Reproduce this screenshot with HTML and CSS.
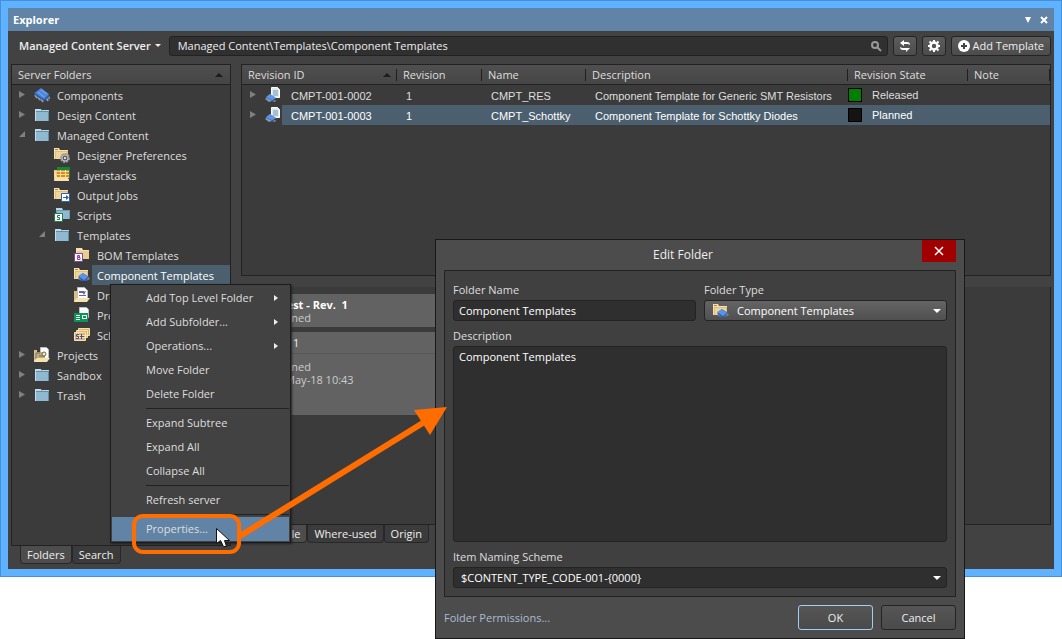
FILE: index.html
```html
<!DOCTYPE html>
<html lang="en">
<head>
  <meta charset="UTF-8" />
  <meta name="viewport" content="width=device-width, initial-scale=1.0" />
  <title>Explorer</title>
  <link rel="stylesheet" href="styles.css">
</head>
<body>
  <!-- shared icons -->
  <svg class="sprite" aria-hidden="true">
    <symbol id="folder" viewBox="0 0 16 16">
      <path fill="#b9d7e6" d="M1 2h6l1 2h-7z"/><path fill="#b9d7e6" d="M8 3h7v1H8z"/><path fill="#5f8fa8" d="M1 4h14v10H1z"/><path fill="#8fb9d0" d="M2 5h12v9H2z"/><path fill="#c5dde9" d="M1 4h1v10H1zM2 2h4v1H2z"/>
    </symbol>
    <symbol id="yfolder" viewBox="0 0 16 16">
      <path fill="#f6e2b0" d="M0 1h5l1 2h8v9H0z"/><path fill="#e0bd7a" d="M1 4h13v8H1z"/><path fill="#f0d59b" d="M2 5h11v7H2z"/><path fill="#a98446" d="M1 2h3v1H1z"/>
    </symbol>
    <symbol id="chip" viewBox="0 0 16 16">
      <path stroke="#8d99a8" stroke-width="2" d="M1 8l2 3M4 10l2 3M7 12l2 3M13 8l3 4M12 10l2 4"/><path fill="#2e5fae" d="M0 6l6-4 9 6v2l-5 4L1 8z"/><path fill="#4e88dc" d="M1 6l6-5 8 6-5 5z"/><path stroke="#7badf2" d="M4 5l6 5M7 3l6 4"/>
    </symbol>
    <symbol id="gearfolder" viewBox="0 0 16 16">
      <use href="#yfolder"/><circle cx="11" cy="11" r="4" fill="#777" stroke="#9a9a9a" stroke-width="2" stroke-dasharray="2 1"/><circle cx="11" cy="11" r="3" fill="#5d5d5d" stroke="#c4c4c4"/><path fill="#d8d8d8" d="M10 10h2v2h-2z"/>
    </symbol>
    <symbol id="layers" viewBox="0 0 16 16">
      <path fill="#e7c986" d="M0 3h3v9h12v2H0z"/><path fill="#12873a" d="M3 0h13v3H3z"/><path fill="#d9862c" d="M3 2h13v9H3z"/><path stroke="#f5e08d" d="M3 4.500h13M3 7.500h13M3 10.500h13M6.500 3v8M11.500 3v8"/><path fill="#12873a" d="M3 1h13v2H3zM15 3h1v8h-1z"/><path fill="#f6e2b0" d="M0 4h1l2 7h11l1 3H1z"/>
    </symbol>
    <symbol id="outjob" viewBox="0 0 16 16">
      <use href="#yfolder"/><path fill="#fff" stroke="#2a62ae" d="M7.500 6.500h8v8h-8z"/><path fill="#2a62ae" d="M9 10h3V8l3 2.500-3 2.500v-2H9z"/>
    </symbol>
    <symbol id="script" viewBox="0 0 16 16">
      <path fill="#b9d7e6" d="M2 1h6l1 2h-7z"/><path fill="#6d9db6" d="M2 3h14v9H2z"/><path fill="#8fb9d0" d="M3 4h12v8H3z"/><path fill="#fff" stroke="#1f7a4c" d="M.5 6.500h8v8h-8z"/><path fill="none" stroke="#1f7a4c" d="M6 8.500H3.500v2h2v2H3"/>
    </symbol>
    <symbol id="bom" viewBox="0 0 16 16">
      <path fill="#f6e2b0" d="M2 1h6l1 2h6v9H2z"/><path fill="#e9cd90" d="M3 4h12v8H3z"/><path fill="#fff" stroke="#8a3fa0" d="M.5 6.500h8v8h-8z"/><path fill="none" stroke="#8a3fa0" d="M3.500 8.500h2v1.500h-2zM3.500 10.500h2.500v2H3.500z"/>
    </symbol>
    <symbol id="comptpl" viewBox="0 0 16 16">
      <use href="#yfolder"/><path fill="#7d8997" d="M4 12l2-2 2 4zM12 14l4-2-2-3z"/><path fill="#2e62b8" d="M4 10l5-4 6 4-3 4H8z"/><path fill="#5b94e6" d="M4 9l5-3 5 4-4 3z"/>
    </symbol>
    <symbol id="drawing" viewBox="0 0 16 16">
      <path fill="#e0bd7a" d="M0 4h3v10H0z"/><path fill="#fff" stroke="#b5bfca" d="M3.500.5h7l3 3v8h-10z"/><path fill="#6c60a8" d="M5 4h5v2H5zM5 8h7v1H5zM8 5l4-1-2 4z"/><path fill="#f6e2b0" d="M0 14l3-3h13l-3 4H0z"/>
    </symbol>
    <symbol id="pcbtpl" viewBox="0 0 16 16">
      <path fill="#fff" stroke="#b5bfca" d="M5.500.5h7l2 2v8h-9z"/><path fill="#11915a" d="M0 6h14v9H0z"/><path fill="#eafff4" d="M2 8h4v1H2zM2 10h4v1H2zM2 12h4v1H2zM8 8h5v4H8z"/><path fill="#11915a" d="M9 9h3v2H9z"/>
    </symbol>
    <symbol id="schtpl" viewBox="0 0 16 16">
      <path fill="#d9b46c" stroke="#f6e2b0" d="M4.500 1.500h11v7h-11zM2.500 3.500h11v7h-11zM.5 5.500h11v8H.5z"/><path fill="none" stroke="#4a4cab" d="M5 7.500H2.500v2h2v2H2M6 9.500h4M7.500 7v5"/>
    </symbol>
    <symbol id="projects" viewBox="0 0 16 16">
      <path fill="#e0bd7a" d="M0 3h3v11H0z"/><path fill="#fff" stroke="#b5bfca" d="M6.500.5h6l2 2v9h-8z"/><path fill="#ccaa66" d="M3 5h8v6H3z"/><path fill="none" stroke="#47749b" d="M2 12V6h4M5 9h6"/><circle cx="10" cy="7" r="2" fill="#ffe9a6" stroke="#6a6a6a"/><path fill="#f6e2b0" d="M0 14l3-3h13l-3 4H0z"/>
    </symbol>
    <symbol id="revision" viewBox="0 0 16 16">
      <path fill="#8d99a8" d="M0 12l3-3 4 5-3 1zM7 14l4-1-1 2z"/><path fill="#dfe9f0" stroke="#fff" d="M6.500.5h6l2 2v8h-8z"/><path fill="#a9c0ce" d="M8 3h5v6H8z"/><path fill="#3f79d0" d="M1 11l4-4 6 4-4 3z"/><path fill="#5b94e6" d="M1 10l4-3 6 4-4 2z"/>
    </symbol>
  </svg>

  <main class="explorer">
    <header class="titlebar">
      <h1>Explorer</h1>
      <button class="title-btn" aria-label="Panel menu"><svg viewBox="0 0 8 8"><path fill="#fff" d="M1 1h6L4 7z"/></svg></button>
      <button class="title-btn" aria-label="Close panel"><svg viewBox="0 0 8 8"><path stroke="#fff" stroke-width="2" d="M1 1l6 6M7 1L1 7"/></svg></button>
    </header>

    <div class="toolbar">
      <button class="server-btn">Managed Content Server <svg viewBox="0 0 6 4"><path fill="#eee" d="M0 0h6L3 3z"/></svg></button>
      <div class="search">
        <input type="text" aria-label="Path" value="Managed Content\Templates\Component Templates">
        <svg viewBox="0 0 12 12"><circle cx="5" cy="5" r="3" fill="none" stroke="#999" stroke-width="2"/><path stroke="#999" stroke-width="2" d="M7 7l4 4"/></svg>
      </div>
      <button class="tool-btn" aria-label="Refresh"><svg viewBox="0 0 12 12"><path fill="#fff" d="M5 0v2h3q3 0 3 3L9 4H5v2L1 3zM7 6v2h4L7 12v-2H4Q1 10 1 7l2 1h4z"/></svg></button>
      <button class="tool-btn" aria-label="Settings"><svg viewBox="0 0 12 12"><circle cx="6" cy="6" r="3.500" fill="none" stroke="#fff" stroke-width="2.500"/><path stroke="#fff" stroke-width="2" d="M6 0v2M6 10v2M0 6h2M10 6h2M1.500 1.500L3 3M9 9l1.500 1.500M10.500 1.500L9 3M3 9l-1.500 1.500"/></svg></button>
      <button class="add-btn"><svg viewBox="0 0 12 12"><circle cx="6" cy="6" r="6" fill="#fff"/><path stroke="#444" stroke-width="2" d="M6 3v6M3 6h6"/></svg>Add Template</button>
    </div>

    <div class="panes">
      <nav class="left-pane">
        <div class="tree-panel">
          <div class="tree-head">Server Folders<i class="sort"></i></div>
          <ul class="tree">
            <li><div class="node"><i class="twisty"></i><svg><use href="#chip"/></svg><span>Components</span></div></li>
            <li><div class="node"><i class="twisty"></i><svg><use href="#folder"/></svg><span>Design Content</span></div></li>
            <li>
              <div class="node"><i class="twisty open"></i><svg><use href="#folder"/></svg><span>Managed Content</span></div>
              <ul>
                <li><div class="node"><i class="twisty none"></i><svg><use href="#gearfolder"/></svg><span>Designer Preferences</span></div></li>
                <li><div class="node"><i class="twisty none"></i><svg><use href="#layers"/></svg><span>Layerstacks</span></div></li>
                <li><div class="node"><i class="twisty none"></i><svg><use href="#outjob"/></svg><span>Output Jobs</span></div></li>
                <li><div class="node"><i class="twisty none"></i><svg><use href="#script"/></svg><span>Scripts</span></div></li>
                <li>
                  <div class="node"><i class="twisty open"></i><svg><use href="#folder"/></svg><span>Templates</span></div>
                  <ul>
                    <li><div class="node"><i class="twisty none"></i><svg><use href="#bom"/></svg><span>BOM Templates</span></div></li>
                    <li><div class="node selected"><i class="twisty none"></i><svg><use href="#comptpl"/></svg><span>Component Templates</span></div></li>
                    <li><div class="node"><i class="twisty none"></i><svg><use href="#drawing"/></svg><span>Draftsman</span></div></li>
                    <li><div class="node"><i class="twisty none"></i><svg><use href="#pcbtpl"/></svg><span>Projects</span></div></li>
                    <li><div class="node"><i class="twisty none"></i><svg><use href="#schtpl"/></svg><span>Schematic</span></div></li>
                  </ul>
                </li>
              </ul>
            </li>
            <li><div class="node"><i class="twisty"></i><svg><use href="#projects"/></svg><span>Projects</span></div></li>
            <li><div class="node"><i class="twisty"></i><svg><use href="#folder"/></svg><span>Sandbox</span></div></li>
            <li><div class="node"><i class="twisty"></i><svg><use href="#folder"/></svg><span>Trash</span></div></li>
          </ul>
        </div>
        <div class="tabs">
          <button class="tab active">Folders</button>
          <button class="tab">Search</button>
        </div>
      </nav>

      <section class="right-pane">
        <div class="grid-panel">
          <table class="revisions">
            <colgroup><col class="c-id"><col class="c-rev"><col class="c-name"><col class="c-desc"><col class="c-state"><col></colgroup>
            <thead>
              <tr><th><div class="th-sort">Revision ID<i class="sort"></i></div></th><th>Revision</th><th>Name</th><th>Description</th><th>Revision State</th><th>Note</th></tr>
            </thead>
            <tbody>
              <tr>
                <td class="id"><div class="id-cell"><i class="twisty"></i><svg><use href="#revision"/></svg><span>CMPT-001-0002</span></div></td>
                <td>1</td><td>CMPT_RES</td><td>Component Template for Generic SMT Resistors</td>
                <td class="state"><div class="state-cell"><i class="swatch released"></i>Released</div></td><td></td>
              </tr>
              <tr class="selected">
                <td class="id"><div class="id-cell"><i class="twisty"></i><svg><use href="#revision"/></svg><span>CMPT-001-0003</span></div></td>
                <td>1</td><td>CMPT_Schottky</td><td>Component Template for Schottky Diodes</td>
                <td class="state"><div class="state-cell"><i class="swatch planned"></i>Planned</div></td><td></td>
              </tr>
            </tbody>
          </table>
        </div>
        <div class="detail-panel">
          <div class="card">
            <strong>Latest - Rev.&nbsp; 1</strong>
            <span>Planned</span>
          </div>
          <div class="card history">
            <div class="card-head">1</div>
            <p>Planned</p>
            <p>15-May-18 10:43</p>
          </div>
        </div>
        <div class="tabs detail-tabs">
          <button class="tab active">Lifecycle</button>
          <button class="tab">Where-used</button>
          <button class="tab">Origin</button>
        </div>
      </section>
    </div>
  </main>

  <div class="menu" role="menu">
    <button class="sub" role="menuitem">Add Top Level Folder</button>
    <button class="sub" role="menuitem">Add Subfolder...</button>
    <button class="sub" role="menuitem">Operations...</button>
    <button role="menuitem">Move Folder</button>
    <button role="menuitem">Delete Folder</button>
    <hr>
    <button role="menuitem">Expand Subtree</button>
    <button role="menuitem">Expand All</button>
    <button role="menuitem">Collapse All</button>
    <hr>
    <button role="menuitem">Refresh server</button>
    <hr>
    <button class="hover" role="menuitem">Properties...</button>
  </div>

  <form class="dialog" onsubmit="return false">
    <div class="dialog-title">
      <h2>Edit Folder</h2>
      <button class="close" type="button" aria-label="Close"><svg viewBox="0 0 10 10"><path stroke="#fff" stroke-width="1.500" d="M1 1l8 8M9 1L1 9"/></svg></button>
    </div>
    <div class="dialog-body">
      <div class="row">
        <div class="field">
          <label for="name">Folder Name</label>
          <input id="name" type="text" value="Component Templates">
        </div>
        <div class="field">
          <label for="type">Folder Type</label>
          <div class="select raised">
            <svg><use href="#comptpl"/></svg>
            <select id="type"><option>Component Templates</option></select>
          </div>
        </div>
      </div>
      <div class="field grow">
        <label for="desc">Description</label>
        <textarea id="desc">Component Templates</textarea>
      </div>
      <div class="field">
        <label for="scheme">Item Naming Scheme</label>
        <div class="select">
          <select id="scheme"><option>$CONTENT_TYPE_CODE-001-{0000}</option></select>
        </div>
      </div>
    </div>
    <div class="dialog-foot">
      <a href="#">Folder Permissions...</a>
      <button class="ok" type="button">OK</button>
      <button type="button">Cancel</button>
    </div>
  </form>

  <!-- callout from the menu item to the dialog -->
  <svg class="callout" viewBox="0 0 340 170" aria-hidden="true">
    <rect x="14" y="116" width="105" height="36" rx="9" fill="none" stroke="#ff6c00" stroke-width="4"/>
    <path stroke="#ff6c00" stroke-width="6" d="M120 136L306 21"/>
    <path fill="#ff6c00" d="M294 10l33-3-17 28z"/>
    <path fill="#fff" stroke="#111" d="M96.500 128.500v15l4-3 3 6h3l-2-6h5z"/>
  </svg>
</body>
</html>
```
FILE: styles.css
```css
* {
  box-sizing: border-box;
}
body {
  position: relative;
  display: flex;
  flex-direction: column;
  min-height: 100vh;
  margin: 0;
  padding-bottom: 62px;
  background: #fff;
  color: #dedede;
  font: 11px/16px "Open Sans", "Noto Sans", sans-serif;
}
button, input, select, textarea {
  margin: 0;
  color: inherit;
  font: inherit;
}
button {
  padding: 0;
  border: none;
  background: none;
}
ul {
  margin: 0;
  padding: 0;
  list-style: none;
}
svg {
  display: block;
  flex: none;
}
.sprite {
  position: absolute;
  width: 0;
  height: 0;
}

/* explorer window */
.explorer {
  flex: 1;
  display: flex;
  flex-direction: column;
  padding: 7px;
  border: 1px solid #4590d8;
  background: #5fb2ff;
}
.titlebar {
  display: flex;
  align-items: center;
  gap: 8px;
  height: 23px;
  padding: 0 6px 0 5px;
  background: #6183a6;
  color: #fff;
}
.titlebar h1 {
  flex: 1;
  margin: 0;
  font-size: 11px;
}
.title-btn svg {
  width: 8px;
  height: 8px;
}
.toolbar {
  display: flex;
  align-items: center;
  gap: 5px;
  height: 33px;
  padding: 0 3px 3px 11px;
  background: #424242;
  color: #eee;
}
.server-btn {
  display: flex;
  align-items: center;
  gap: 4px;
  margin-right: 3px;
  font-weight: 600;
}
.server-btn svg {
  width: 6px;
  height: 4px;
}
.search {
  flex: 1;
  display: flex;
  align-items: center;
  height: 20px;
  padding: 0 5px 0 8px;
  border: 1px solid #222;
  border-radius: 3px;
  background: #303030;
}
.search input {
  flex: 1;
  min-width: 0;
  padding: 0;
  border: none;
  outline: none;
  background: none;
}
.search svg, .tool-btn svg, .add-btn svg {
  width: 12px;
  height: 12px;
}
.tool-btn, .add-btn {
  display: flex;
  align-items: center;
  justify-content: center;
  gap: 3px;
  width: 24px;
  height: 20px;
  border: 1px solid #242424;
  border-radius: 3px;
  background: linear-gradient(#5c5c5c, #4c4c4c);
}
.add-btn {
  width: auto;
  padding: 0 6px;
}
.panes {
  flex: 1;
  display: flex;
  gap: 10px;
  padding: 0 3px 5px;
  background: #424242;
}

/* folder tree */
.left-pane {
  display: flex;
  flex-direction: column;
  width: 220px;
}
.tree-panel {
  flex: 1;
  border: 1px solid #222;
  background: #3b3b3b;
}
.tree-head {
  display: flex;
  align-items: center;
  justify-content: space-between;
  height: 20px;
  padding: 0 7px 0 6px;
  border-bottom: 1px solid #222;
  background: linear-gradient(#4f4f4f, #454545);
}
.sort {
  border: 4px solid transparent;
  border-top: none;
  border-bottom: 4px solid #1c1c1c;
}
.tree ul {
  padding-left: 20px;
}
.node {
  display: flex;
  align-items: center;
  height: 20px;
  padding-left: 2px;
}
.node svg, .id-cell svg {
  width: 16px;
  height: 16px;
}
.node span {
  flex: 1;
  height: 20px;
  margin-left: 2px;
  padding-left: 5px;
  line-height: 22px;
  white-space: nowrap;
}
.node.selected span {
  background: #4b5f6e;
  color: #fff;
}
.twisty {
  flex: none;
  width: 20px;
  height: 8px;
}
.twisty::before {
  content: "";
  display: block;
  width: 6px;
  height: 7px;
  margin-left: 5px;
  background: #808080;
  clip-path: polygon(0 0, 100% 50%, 0 100%);
}
.twisty.open::before {
  width: 6px;
  height: 6px;
  clip-path: polygon(100% 0, 100% 100%, 0 100%);
}
.twisty.none::before {
  display: none;
}
.tabs {
  display: flex;
  height: 18px;
  padding-left: 9px;
}
.tab {
  padding: 0 6px;
  border: 1px solid #282828;
  border-top: none;
  border-radius: 0 0 4px 4px;
  background: #3b3b3b;
  color: #eee;
}
.tab.active {
  background: #4d4d4d;
}

/* revision list */
.right-pane {
  flex: 1;
  display: flex;
  flex-direction: column;
  min-width: 0;
}
.grid-panel {
  height: 212px;
  border: 1px solid #222;
  background: #3b3b3b;
}
.revisions {
  width: 100%;
  table-layout: fixed;
  border-collapse: collapse;
}
.c-id { width: 155px; }
.c-rev { width: 85px; }
.c-name { width: 104px; }
.c-desc { width: 262px; }
.c-state { width: 120px; }
.revisions thead {
  background: linear-gradient(#4f4f4f, #454545);
  box-shadow: inset 0 -1px #222;
}
.revisions th {
  height: 20px;
  padding: 0 6px;
  background: linear-gradient(#1f1f1f, #1f1f1f) right center / 1px 12px no-repeat;
  font-weight: normal;
  text-align: left;
}
.th-sort {
  display: flex;
  align-items: center;
  justify-content: space-between;
}
.revisions td {
  height: 20px;
  padding: 2px 0 0 9px;
  font-family: "Liberation Sans", Arial, sans-serif;
  white-space: nowrap;
}
.revisions td.id, .revisions td.state {
  padding: 0;
}
.id-cell, .state-cell {
  display: flex;
  align-items: center;
  height: 20px;
  line-height: 22px;
}
.id-cell {
  padding-left: 3px;
}
.id-cell span {
  flex: 1;
  height: 20px;
  margin-left: 1px;
  padding-left: 9px;
}
.selected td {
  background: #4b5f6e;
  color: #fff;
}
.selected td.id {
  background: none;
}
.selected .id-cell span {
  background: #4b5f6e;
}
.swatch {
  width: 14px;
  height: 14px;
  margin-right: 10px;
  border: 1px solid #000;
}
.released { background: #008000; }
.planned { background: #141414; }

/* lifecycle preview */
.detail-panel {
  flex: 1;
  margin-top: 11px;
  padding-top: 7px;
  border: 1px solid #222;
  border-top: none;
  background: #3b3b3b;
}
.card {
  display: flex;
  flex-direction: column;
  max-width: 640px;
  height: 33px;
  margin: 0 6px 5px;
  padding: 4px 21px;
  background: #626262;
  color: #ccc;
  line-height: 13px;
}
.card strong {
  color: #fff;
}
.card.history {
  height: 83px;
  padding: 0;
}
.card-head {
  height: 22px;
  margin-bottom: 6px;
  padding: 4px 45px;
  border-bottom: 1px solid #575757;
  color: #eee;
}
.card p {
  margin: 0;
  padding-left: 21px;
}
.detail-tabs {
  margin-bottom: 21px;
}

/* context menu */
.menu {
  position: absolute;
  top: 284px;
  left: 110px;
  width: 181px;
  padding: 1px;
  border: 1px solid #1c1c1c;
  background: #424242;
  box-shadow: 1px 1px 2px #222;
}
.menu button {
  display: flex;
  align-items: center;
  justify-content: space-between;
  width: 100%;
  height: 24px;
  padding: 0 11px 0 34px;
}
.menu .sub::after {
  content: "";
  border: 3px solid transparent;
  border-left: 4px solid #eee;
  border-right: none;
}
.menu .hover {
  background: #6183a6;
}
.menu hr {
  height: 1px;
  margin: 2px 0 2px 34px;
  border: none;
  background: #222;
}

/* edit folder dialog */
.dialog {
  position: absolute;
  top: 239px;
  bottom: 0;
  left: 435px;
  width: 530px;
  display: flex;
  flex-direction: column;
  padding: 0 8px;
  border: 1px solid #191919;
  background: #4c4c4c;
}
.dialog-title {
  display: flex;
  height: 30px;
}
.dialog-title h2 {
  flex: 1;
  margin: 0;
  color: #eee;
  font-size: 12px;
  font-weight: normal;
  line-height: 30px;
  text-align: center;
}
.close {
  display: flex;
  align-items: center;
  justify-content: center;
  width: 34px;
  height: 22px;
  background: #a00000;
}
.close svg {
  width: 10px;
  height: 10px;
}
.dialog-body {
  flex: 1;
  display: flex;
  flex-direction: column;
  gap: 7px;
  padding: 11px 8px 8px;
  border: 1px solid #222;
  background: #404040;
}
.row {
  display: flex;
  gap: 8px;
}
.row .field {
  flex: 1;
}
.field {
  display: flex;
  flex-direction: column;
  gap: 2px;
}
.field.grow {
  flex: 1;
}
.field input, .field select, .field textarea {
  width: 100%;
  height: 21px;
  padding: 0 5px;
  border: 1px solid #232323;
  border-radius: 3px;
  outline: none;
  background: #2f2f2f;
  color: #fff;
}
.field textarea {
  flex: 1;
  padding: 2px 5px;
  resize: none;
}
.select {
  position: relative;
}
.select select {
  display: block;
  padding: 0 7px;
  appearance: none;
}
.select::after {
  content: "";
  position: absolute;
  top: 9px;
  right: 6px;
  border: 4px solid transparent;
  border-top: 4px solid #fff;
  border-bottom: none;
}
.field .raised select {
  padding-left: 32px;
  background: linear-gradient(#646464, #505050);
}
.raised svg {
  position: absolute;
  top: 3px;
  left: 9px;
  width: 16px;
  height: 16px;
}
.dialog-foot {
  display: flex;
  align-items: center;
  gap: 8px;
  height: 41px;
}
.dialog-foot a {
  flex: 1;
  color: #a9bdd3;
  text-decoration: none;
}
.dialog-foot button {
  width: 75px;
  height: 25px;
  border: 1px solid #242424;
  border-radius: 3px;
  background: linear-gradient(#565656, #4a4a4a);
  color: #eee;
}
.dialog-foot .ok {
  border-color: #a5cdf0;
}
.callout {
  position: absolute;
  top: 400px;
  left: 120px;
  width: 340px;
  height: 170px;
  pointer-events: none;
}
```
